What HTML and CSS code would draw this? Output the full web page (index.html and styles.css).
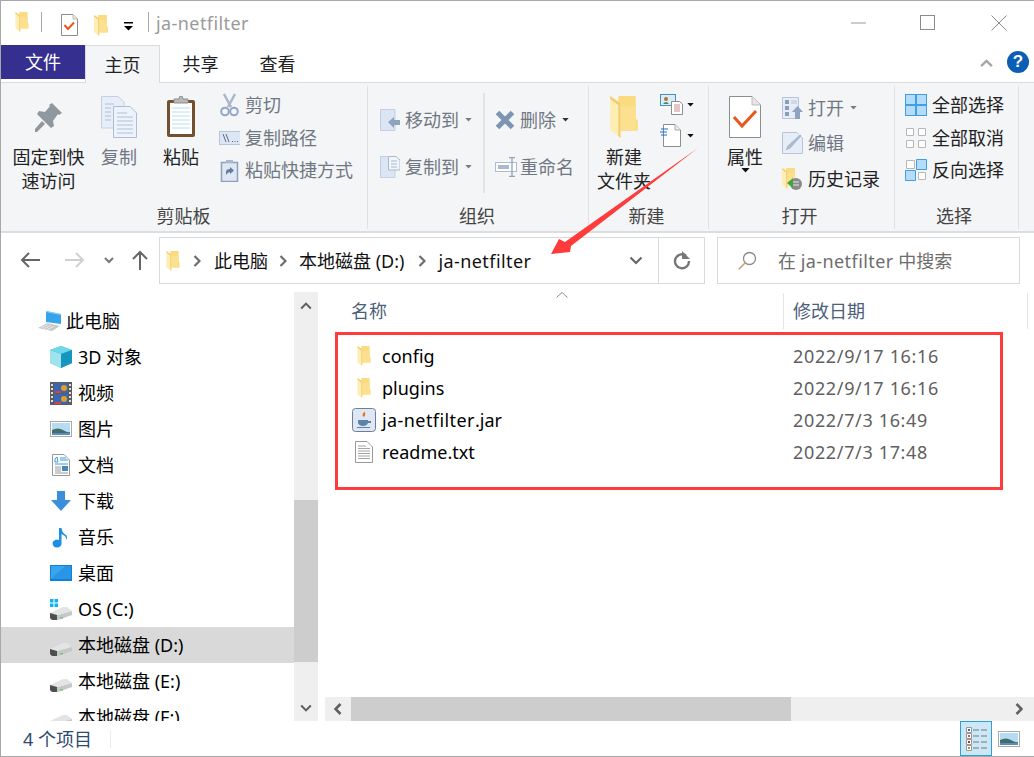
FILE: index.html
```html
<!DOCTYPE html>
<html lang="zh-CN">
<head>
<meta charset="utf-8">
<title>ja-netfilter</title>
<link rel="stylesheet" href="styles.css">
</head>
<body>
<svg class="defs" aria-hidden="true">
  <symbol id="folder" viewBox="0 0 27 41">
    <path d="M8 0H25V23H27V34H9L8 30Z" fill="#fbdb80"/>
    <path d="M9 10H25V34H9Z" fill="#fbe08f"/>
    <path d="M0 0L10 7V41L1 34H0Z" fill="#fdeeb4"/>
    <path d="M0 0L10 7V41L8 39V9L0 3Z" fill="#f3cd6c"/>
  </symbol>
  <symbol id="drive" viewBox="0 0 22 13">
    <path d="M0 6L13 0H17L22 4L8 8H4Z" fill="#e3e4e5"/>
    <path d="M0 6L4 8H8L22 4V8L8 13H2L0 11Z" fill="#c6c7c8"/>
    <path d="M0 6L7 8V13H2L0 11Z" fill="#4f4f4f"/>
    <path d="M10 10h3v1.500h-3z" fill="#7fc27a"/>
  </symbol>
  <symbol id="chev" viewBox="0 0 14 10">
    <path d="M1 8L7 2L13 8" fill="none" stroke="currentColor" stroke-width="2.6"/>
  </symbol>
  <symbol id="caret" viewBox="0 0 8 5">
    <path d="M0 0H8L4 4.5Z" fill="currentColor"/>
  </symbol>
  <symbol id="crumb" viewBox="0 0 8 12">
    <path d="M1.5 1L6.5 6L1.5 11" fill="none" stroke="#6d6d6d" stroke-width="2.2"/>
  </symbol>
  <symbol id="landscape" viewBox="0 0 22 16">
    <rect x=".5" y=".5" width="21" height="15" fill="#fff" stroke="#a9a9a9"/>
    <rect x="2" y="2" width="18" height="12" fill="#b6dcf5"/>
    <path d="M2 9Q8 6 13 9T20 11V14H2Z" fill="#3f6f65"/>
    <path d="M2 12H20V14H2Z" fill="#5a8cc0"/>
  </symbol>
</svg>

<div class="window">
  <header class="titlebar">
    <svg class="qa qa-folder1" width="14" height="20"><use href="#folder"/></svg>
    <span class="qa-sep qa-sep1"></span>
    <svg class="qa qa-check" width="17" height="22" viewBox="0 0 17 22">
      <path d="M.5.5H12L16.5 5V21.5H.5Z" fill="#fff" stroke="#8d8d8d"/>
      <path d="M12 .5V5H16.5" fill="#e8e8e8" stroke="#bbb"/>
      <path d="M3.5 11L7 15L13 8.5" fill="none" stroke="#e8561e" stroke-width="2"/>
    </svg>
    <svg class="qa qa-folder2" width="14" height="21"><use href="#folder"/></svg>
    <svg class="qa qa-drop" width="9" height="9" viewBox="0 0 9 9">
      <path d="M0 0H9V1.5H0Z" fill="#000"/><path d="M0 4H9L4.5 8.5Z" fill="#000"/>
    </svg>
    <span class="qa-sep qa-sep2"></span>
    <span class="title-text wide">ja-netfilter</span>
    <div class="winctl">
      <svg class="ctl-min" width="15" height="2" viewBox="0 0 15 2"><path d="M0 1H15" stroke="#9a9a9a"/></svg>
      <svg class="ctl-max" width="15" height="15" viewBox="0 0 15 15"><rect x=".5" y=".5" width="14" height="14" fill="none" stroke="#8c8c8c"/></svg>
      <svg class="ctl-close" width="16" height="16" viewBox="0 0 16 16"><path d="M.5.5L15.5 15.5M15.5.5L.5 15.5" stroke="#8c8c8c" fill="none"/></svg>
    </div>
  </header>

  <nav class="tabs">
    <span class="tab tab-file">文件</span>
    <span class="tab tab-home">主页</span>
    <span class="tab tab-plain tab-share">共享</span>
    <span class="tab tab-plain tab-view">查看</span>
    <svg class="ribbon-up" width="17" height="9"><use href="#chev"/></svg>
    <span class="help">?</span>
  </nav>

  <section class="ribbon">
    <div class="group g-clip">
      <div class="group-body">
        <div class="big w79">
          <svg class="big-icon" width="32" height="42" viewBox="0 0 32 42">
            <path d="M19 6L29 16L26 18L25 17L20 24L21 29L18 31L4.000 17L6 14L12 15L17 9L16 8Z" transform="translate(0 1)" fill="#8f989f"/>
            <path d="M9 25L2 33V36H4L12 28Z" fill="#8f989f"/>
          </svg>
          <span class="big-label">固定到快<br>速访问</span>
        </div>
        <div class="big w62 off">
          <svg class="big-icon" width="36" height="42" viewBox="0 0 36 42">
            <path d="M.5.5H17L23 6V32H.5Z" fill="#e8eef8" stroke="#c5d0e2"/>
            <path d="M12.500 10.500H29L35.500 17V41.500H12.500Z" fill="#eef3fb" stroke="#adbdd6"/>
            <path d="M4 8h9M4 12h6M4 16h6M4 20h6M4 24h6M16 17h10M16 21h16M16 25h16M16 29h16M16 33h16M16 37h16" stroke="#aebfd8"/>
          </svg>
          <span class="big-label">复制</span>
        </div>
        <div class="big w62">
          <svg class="big-icon" width="30" height="42" viewBox="0 0 30 42">
            <rect x="1" y="4" width="28" height="37" rx="2" fill="#75502f"/>
            <rect x="4" y="7" width="22" height="31" fill="#fff"/>
            <path d="M6 12h18M6 16h18M6 20h18M6 24h18M6 28h18M6 32h18" stroke="#bcdcf2"/>
            <path d="M8 3h5l1-3h2l1 3h5v4H8Z" fill="#b8b8b8" stroke="#8f8f8f"/>
          </svg>
          <span class="big-label">粘贴</span>
        </div>
        <div class="col rows32 ml7 off">
          <div class="row">
            <svg class="ic21" width="21" height="24" viewBox="0 0 21 24">
              <path d="M5 1L12 14M16 1L9 14" stroke="#a8b7cd" stroke-width="2.500" fill="none"/>
              <circle cx="6" cy="18.500" r="3.800" fill="none" stroke="#90a7c7" stroke-width="2"/>
              <circle cx="15" cy="18.500" r="3.800" fill="none" stroke="#90a7c7" stroke-width="2"/>
            </svg>
            <span>剪切</span>
          </div>
          <div class="row">
            <svg class="ic21" width="21" height="14" viewBox="0 0 21 14">
              <rect x=".5" y=".5" width="21" height="13" fill="#dde6f2" stroke="#b5c5da"/>
              <path d="M4 3L7 11M7 3L10 11" stroke="#5d6f88"/>
              <path d="M13 10.500h1M15.500 10.500h1M18 10.500h1" stroke="#5d6f88"/>
            </svg>
            <span>复制路径</span>
          </div>
          <div class="row">
            <svg class="ic21" width="21" height="23" viewBox="0 0 21 23">
              <path d="M2.500 3.500H18.500V22.500H2.500Z" fill="#dfe7f2" stroke="#8da1bc" stroke-width="1.500"/>
              <path d="M7 1H14V4H7Z" fill="#a9b8cc"/>
              <path d="M7 16V13Q7 10 11 10V8L15 11.500L11 15V13Q9 13 7 16Z" fill="#607d9f"/>
            </svg>
            <span>粘贴快捷方式</span>
          </div>
        </div>
      </div>
      <div class="group-label">剪贴板</div>
    </div>

    <div class="group g-org">
      <div class="group-body">
        <div class="col rows47 org-a off">
          <div class="row">
            <svg class="ic20" width="20" height="22" viewBox="0 0 20 22">
              <path d="M.5.500H15V21.500H.5Z" fill="#dbe5f3" stroke="#c3d0e3"/>
              <path d="M8 13L14 8V11H20V16H14V19Z" fill="#8fa3bf"/>
            </svg>
            <span>移动到</span><svg class="drop" width="7" height="4"><use href="#caret"/></svg>
          </div>
          <div class="row">
            <svg class="ic20" width="20" height="22" viewBox="0 0 20 22">
              <path d="M.5.500H15V21.500H.5Z" fill="#dbe5f3" stroke="#c3d0e3"/>
              <path d="M8.500.500H16L20 4V14H8.500Z" fill="#f2f5fa" stroke="#a9b9d0"/>
              <path d="M11 5h6M11 8h6M11 11h6" stroke="#a9b9d0"/>
            </svg>
            <span>复制到</span><svg class="drop" width="7" height="4"><use href="#caret"/></svg>
          </div>
        </div>
        <span class="vsep"></span>
        <div class="col rows47 org-b">
          <div class="row off">
            <svg class="ic20" width="20" height="20" viewBox="0 0 20 20">
              <path d="M2.500 2.500L17.500 17.500M17.500 2.500L2.500 17.500" stroke="#7e94b3" stroke-width="5"/>
            </svg>
            <span>删除</span><svg class="drop drop-dark" width="7" height="4"><use href="#caret"/></svg>
          </div>
          <div class="row off">
            <svg class="ic22" width="22" height="20" viewBox="0 0 22 20">
              <rect x=".5" y="5.500" width="21" height="9" fill="#fff" stroke="#aebcd0"/>
              <rect x="3" y="8" width="11" height="4" fill="#a9b9d0"/>
              <path d="M14 .5H20M17 .5V19.500M14 19.500H20" stroke="#8fa3bf" stroke-width="1.300" fill="none"/>
            </svg>
            <span class="tight">重命名</span>
          </div>
        </div>
      </div>
      <div class="group-label">组织</div>
    </div>

    <div class="group g-new">
      <div class="group-body">
        <div class="big w70">
          <svg class="big-icon" width="28" height="42"><use href="#folder"/></svg>
          <span class="big-label">新建<br>文件夹</span>
        </div>
        <div class="col rows31 ml1">
          <div class="row">
            <svg width="24" height="21" viewBox="0 0 24 21">
              <rect x=".5" y=".5" width="15" height="11" fill="#d9ecf8" stroke="#4a8fc2"/>
              <circle cx="6" cy="5" r="2" fill="#b3703a"/><path d="M3 10Q6 6 9 10Z" fill="#3f8f5a"/>
              <path d="M11.500 7.500H19.500L22.500 10V20.500H11.500Z" fill="#fff" stroke="#8d8d8d"/>
              <path d="M14 11h6M14 13h6M14 15h6M14 17h6" stroke="#d08a8a"/>
            </svg>
            <svg class="drop drop-black" width="7" height="4"><use href="#caret"/></svg>
          </div>
          <div class="row">
            <svg width="21" height="23" viewBox="0 0 21 23">
              <path d="M3.500.5H15L20.500 6V22.500H3.500Z" fill="#fff" stroke="#8d8d8d"/>
              <path d="M15 .5V6H20.500" fill="#ececec" stroke="#aaa"/>
              <path d="M1 5h7M0 8h7M1 11h6" stroke="#1672c4" stroke-width="1.200"/>
            </svg>
            <svg class="drop drop-black drop-wide" width="7" height="4"><use href="#caret"/></svg>
          </div>
        </div>
      </div>
      <div class="group-label">新建</div>
    </div>

    <div class="group g-open">
      <div class="group-body">
        <div class="big w72">
          <svg class="big-icon" width="32" height="42" viewBox="0 0 32 42">
            <path d="M.5.5H23L31.500 9V41.500H.5Z" fill="#fff" stroke="#8d8d8d"/>
            <path d="M23 .5V9H31.500" fill="#e6e6e6" stroke="#bdbdbd"/>
            <path d="M5 21L13 30L27 15" fill="none" stroke="#e8561e" stroke-width="3"/>
          </svg>
          <span class="big-label">属性</span>
          <svg class="prop-caret" width="9" height="5"><use href="#caret"/></svg>
        </div>
        <div class="col rows36 ml1">
          <div class="row off">
            <svg class="ic21" width="21" height="22" viewBox="0 0 21 22">
              <rect x=".5" y=".5" width="16" height="21" fill="#e7edf6" stroke="#b6c5da"/>
              <path d="M3 3h4v4H3zM3 9h4v4H3zM3 15h4v4H3z" fill="#8a9fbd"/>
              <path d="M9 4h6M9 6h6" stroke="#b6c5da"/>
              <path d="M15.500 9L21 15H18V22H13V15H10Z" fill="#8fa3bf"/>
            </svg>
            <span>打开</span><svg class="drop" width="7" height="4"><use href="#caret"/></svg>
          </div>
          <div class="row off">
            <svg class="ic21" width="21" height="22" viewBox="0 0 21 22">
              <path d="M.5.500H15L20.500 6V21.500H.5Z" fill="#e7edf6" stroke="#b6c5da"/>
              <path d="M3 19L5 14L18 2L20 4L8 17Z" fill="#a9b9d0" stroke="#fff" stroke-width=".5"/>
            </svg>
            <span>编辑</span>
          </div>
          <div class="row">
            <svg class="ic21" width="21" height="22" viewBox="0 0 21 22">
              <use href="#folder" width="14" height="21"/>
              <circle cx="14" cy="16" r="6" fill="#8b8b8b"/>
              <path d="M11 14h6M11 17h6" stroke="#e5e5e5"/>
              <path d="M5 15L11 10V20Z" fill="#3ea63a"/>
            </svg>
            <span class="on">历史记录</span>
          </div>
        </div>
      </div>
      <div class="group-label">打开</div>
    </div>

    <div class="group g-sel">
      <div class="group-body">
        <div class="col rows32">
          <div class="row">
            <svg class="ic22" width="22" height="22" viewBox="0 0 22 22">
              <rect x=".5" y=".5" width="21" height="21" fill="#b5dcfa" stroke="#3f9ee6"/>
              <path d="M11 0V22M0 11H22" stroke="#3f9ee6" stroke-width="2"/>
            </svg>
            <span class="on">全部选择</span>
          </div>
          <div class="row">
            <svg class="ic22" width="22" height="22" viewBox="0 0 22 22">
              <path d="M1.500 1.500h7v7h-7zM13.500 1.500h7v7h-7zM1.500 13.500h7v7h-7zM13.500 13.500h7v7h-7z" fill="#fff" stroke="#b7b7b7"/>
            </svg>
            <span class="on">全部取消</span>
          </div>
          <div class="row">
            <svg class="ic22" width="22" height="22" viewBox="0 0 22 22">
              <path d="M1.500 1.500h8v8h-8zM13.500 13.500h7v7h-7z" fill="#fff" stroke="#b7b7b7"/>
              <path d="M11.500 .5h10v10h-10zM.5 11.500h10v10h-10z" fill="#b5dcfa" stroke="#3f9ee6"/>
            </svg>
            <span class="on">反向选择</span>
          </div>
        </div>
      </div>
      <div class="group-label">选择</div>
    </div>
  </section>

  <div class="addr">
    <div class="navs">
      <svg class="nav-back" width="20" height="16" viewBox="0 0 20 16"><path d="M9 1L2 8L9 15M2 8H20" fill="none" stroke="#666" stroke-width="2"/></svg>
      <svg class="nav-fwd" width="20" height="16" viewBox="0 0 20 16"><path d="M11 1L18 8L11 15M18 8H0" fill="none" stroke="#d0d0d0" stroke-width="2"/></svg>
      <svg class="nav-down" width="12" height="8" viewBox="0 0 12 8"><path d="M2 2L6 6L10 2" fill="none" stroke="#777" stroke-width="2"/></svg>
      <svg class="nav-up" width="16" height="20" viewBox="0 0 16 20"><path d="M1 9L8 2L15 9M8 2V20" fill="none" stroke="#666" stroke-width="2"/></svg>
    </div>
    <div class="pathbox">
      <svg class="path-folder" width="14" height="20"><use href="#folder"/></svg>
      <svg class="crumb c1" width="8" height="12"><use href="#crumb"/></svg>
      <span>此电脑</span>
      <svg class="crumb" width="8" height="12"><use href="#crumb"/></svg>
      <span>本地磁盘 (D:)</span>
      <svg class="crumb c3" width="8" height="12"><use href="#crumb"/></svg>
      <span class="wide">ja-netfilter</span>
      <svg class="path-chev" width="14" height="9" viewBox="0 0 14 9"><path d="M1.500 1.500L7 7L12.500 1.500" fill="none" stroke="#666" stroke-width="2.200"/></svg>
      <div class="refresh">
        <svg width="18" height="19" viewBox="0 0 18 19">
          <path d="M13 4.500A7 7 0 1 0 16 10" fill="none" stroke="#777" stroke-width="2.400"/>
          <path d="M9 0L9 8H17Z" fill="#777"/>
        </svg>
      </div>
    </div>
    <div class="searchbox">
      <svg width="19" height="19" viewBox="0 0 19 19"><circle cx="11.500" cy="7.500" r="6" fill="none" stroke="#8a8a8a" stroke-width="1.300"/><path d="M7 12L.8 18.200" stroke="#c99a6b" stroke-width="1.500"/></svg>
      <span>在 <span class="wide">ja-netfilter</span> 中搜索</span>
    </div>
  </div>

  <main class="main">
    <aside class="sidebar">
      <ul class="tree">
        <li class="node node-pc">
          <svg width="24" height="20" viewBox="0 0 24 20">
            <path d="M8 0L23 3V13L8 11Z" fill="#35a4ea"/><path d="M8 0L23 3V4L8 1Z" fill="#8fd2f7"/>
            <path d="M0 17L9 12L22 15L14 20Z" fill="#c6c9cc"/><path d="M3 16.500l7-3M6 17.500l7-3M9 18.500l7-3" stroke="#e8e8e8"/>
          </svg>
          <span>此电脑</span>
        </li>
        <li class="node">
          <svg width="22" height="22" viewBox="0 0 22 22">
            <path d="M11 0L22 4V17L11 22L0 17V4Z" fill="#27b4d8"/><path d="M0 4L11 8V22L0 17Z" fill="#9fe3ee"/><path d="M11 0L22 4L11 8L0 4Z" fill="#6fd7e8"/><path d="M11 8L22 4V17L11 22Z" fill="#1596bf"/>
          </svg>
          <span>3D 对象</span>
        </li>
        <li class="node">
          <svg width="22" height="23" viewBox="0 0 22 23">
            <rect width="22" height="23" fill="#5c5c5c"/>
            <rect x="4" y="1" width="14" height="10" fill="#3a64b4"/><rect x="4" y="12" width="14" height="10" fill="#3a64b4"/>
            <circle cx="14" cy="6" r="3" fill="#e0a020"/><circle cx="14" cy="17" r="3" fill="#e0a020"/><path d="M5 9h6v2H5zM5 20h6v2H5z" fill="#d8433a"/>
            <path d="M1 2h2v2H1zM1 6h2v2H1zM1 10h2v2H1zM1 14h2v2H1zM1 18h2v2H1zM19 2h2v2h-2zM19 6h2v2h-2zM19 10h2v2h-2zM19 14h2v2h-2zM19 18h2v2h-2z" fill="#ddd"/>
          </svg>
          <span>视频</span>
        </li>
        <li class="node">
          <svg width="22" height="16"><use href="#landscape"/></svg>
          <span>图片</span>
        </li>
        <li class="node">
          <svg width="22" height="22" viewBox="0 0 18 22">
            <path d="M.5.5H12L17.500 6V21.500H.5Z" fill="#fff" stroke="#999"/>
            <path d="M3 5L5 3L6 8H3zM8 4h6M8 6h8M3 10h13" stroke="#3a9ae0" fill="none"/>
            <path d="M3 13h6M3 15h6M3 17h6M3 19h13" stroke="#999"/><rect x="10" y="12" width="6" height="5" fill="#4a86b8"/>
          </svg>
          <span>文档</span>
        </li>
        <li class="node">
          <svg width="22" height="20" viewBox="0 0 20 20"><path d="M6 0H14V9H20L10 20L0 9H6Z" fill="#3a8fdc"/></svg>
          <span>下载</span>
        </li>
        <li class="node">
          <svg width="22" height="21" viewBox="0 0 22 21"><path d="M9 1H11.500Q12 6 16 8Q18 10 16 13Q17 9 11.500 7V16A4.500 4 0 1 1 9 13Z" fill="#1a8fe3"/></svg>
          <span>音乐</span>
        </li>
        <li class="node">
          <svg width="22" height="16" viewBox="0 0 22 16"><rect width="22" height="16" fill="#0f80d8"/><path d="M1 1H21V14H1Z" fill="#37a6ee"/><path d="M1 14L15 1H21V14Z" fill="#2a95e4"/></svg>
          <span>桌面</span>
        </li>
        <li class="node">
          <svg width="22" height="21" viewBox="0 0 22 21">
            <path d="M0 0H3.500V3.500H0ZM4.500 0H8V3.500H4.500ZM0 4.500H3.500V8H0ZM4.500 4.500H8V8H4.500Z" fill="#12b4f0"/>
            <use href="#drive" y="8" width="22" height="13"/>
          </svg>
          <span>OS (C:)</span>
        </li>
        <li class="node selected">
          <svg class="drive-ic" width="22" height="13"><use href="#drive"/></svg>
          <span>本地磁盘 (D:)</span>
        </li>
        <li class="node">
          <svg class="drive-ic" width="22" height="13"><use href="#drive"/></svg>
          <span>本地磁盘 (E:)</span>
        </li>
        <li class="node">
          <svg class="drive-ic" width="22" height="13"><use href="#drive"/></svg>
          <span>本地磁盘 (F:)</span>
        </li>
      </ul>
      <div class="vscroll">
        <svg class="vs-up" width="12" height="8"><use href="#chev"/></svg>
        <div class="vs-top"></div>
        <div class="vs-thumb"></div>
        <div class="vs-bottom"></div>
        <svg class="vs-down" width="12" height="8"><use href="#chev"/></svg>
      </div>
    </aside>
    <section class="content">
      <div class="list-head">
        <span class="th-name">名称</span>
        <svg class="sort" width="12" height="6" viewBox="0 0 12 6"><path d="M.5 5.500L6 .5L11.500 5.500" fill="none" stroke="#8a8a8a"/></svg>
        <span class="th-date">修改日期</span>
      </div>
      <div class="files">
        <div class="file">
          <span class="f-ico"><svg width="14" height="20"><use href="#folder"/></svg></span>
          <span class="f-name">config</span><span class="f-date">2022/9/17 16:16</span>
        </div>
        <div class="file">
          <span class="f-ico"><svg width="14" height="20"><use href="#folder"/></svg></span>
          <span class="f-name">plugins</span><span class="f-date">2022/9/17 16:16</span>
        </div>
        <div class="file">
          <span class="f-ico">
            <svg width="24" height="24" viewBox="0 0 24 24">
              <rect x=".5" y=".5" width="23" height="23" rx="3" fill="#dfe8f2" stroke="#6c8199"/>
              <path d="M12 4Q9 8 12 9Q14 7 13 4Z" fill="#e4761b"/>
              <path d="M6 12H16V15Q15 18 11 18Q7 18 6 15ZM16 13H19V15H16Z" fill="#5b84a8"/>
              <path d="M5 19.500H18" stroke="#5b84a8"/>
            </svg>
          </span>
          <span class="f-name"><span class="wide">ja-netfilter</span>.jar</span><span class="f-date">2022/7/3 16:49</span>
        </div>
        <div class="file">
          <span class="f-ico">
            <svg width="18" height="22" viewBox="0 0 18 22">
              <path d="M.5.5H12L17.500 6V21.500H.5Z" fill="#fff" stroke="#9a9a9a"/>
              <path d="M3 5h8M3 7.500h12M3 10h12M3 12.500h12M3 15h12M3 17.500h12" stroke="#a5a5a5"/>
            </svg>
          </span>
          <span class="f-name">readme.txt</span><span class="f-date">2022/7/3 17:48</span>
        </div>
      </div>
      <div class="hscroll">
        <svg class="hs-left" width="8" height="12" viewBox="0 0 8 12"><path d="M6.500 1L1.500 6L6.500 11" fill="none" stroke="#606060" stroke-width="2.600"/></svg>
        <div class="hs-thumb"></div>
        <svg class="hs-right" width="8" height="12" viewBox="0 0 8 12"><path d="M1.500 1L6.500 6L1.500 11" fill="none" stroke="#606060" stroke-width="2.600"/></svg>
      </div>
    </section>
  </main>

  <footer class="status">
    <span class="count">4 个项目</span>
    <span class="status-sep"></span>
    <div class="views">
      <span class="view active">
        <svg width="21" height="24" viewBox="0 0 21 24">
          <path d="M.5.500h5v5h-5zM.5 6.500h5v5h-5zM.5 12.500h5v5h-5zM.5 18.500h5v5h-5z" fill="#fff" stroke="#999"/>
          <path d="M2 2h2v2H2z" fill="#2a73b8"/><path d="M2 8h2v2H2z" fill="#c5682c"/><path d="M2 14h2v2H2z" fill="#c62828"/><path d="M2 20h2v2H2z" fill="#86a83a"/>
          <path d="M7 3h6M15 3h6M7 9h6M15 9h6M7 15h6M15 15h6M7 21h6M15 21h6" stroke="#777"/>
        </svg>
      </span>
      <span class="view">
        <svg width="22" height="16"><use href="#landscape"/></svg>
      </span>
    </div>
  </footer>

  <svg class="arrow" width="160" height="120" viewBox="0 0 160 120">
    <path d="M148 0L21 98L20 104L1 106L9 91L15 94Z" fill="#ff3b3b"/>
  </svg>
  <div class="redbox"></div>
</div>
</body>
</html>
```

FILE: styles.css
```css
* { box-sizing: border-box; }
html, body { margin: 0; padding: 0; height: 100%; overflow: hidden; background: #fff; }
body { font-family: "Noto Sans", "Noto Sans CJK SC", sans-serif; font-size: 18px; color: #000; }
svg { display: block; flex: none; }
.defs { position: absolute; width: 0; height: 0; }
ul { list-style: none; margin: 0; padding: 0; }
.wide { letter-spacing: .42px; }

.window {
  position: relative;
  width: 1034px;
  height: 757px;
  display: flex;
  flex-direction: column;
  border-left: 1px solid #a8a8a8;
  border-top: 1px solid #a8a8a8;
  border-bottom: 1px solid #a8a8a8;
  overflow: hidden;
}

/* title bar */
.titlebar { height: 44px; display: flex; align-items: center; flex: none; }
.qa-folder1 { margin-left: 14px; margin-top: -3px; }
.qa-sep { width: 1px; height: 20px; background: #a8a8a8; margin-top: -3px; flex: none; }
.qa-sep1 { margin-left: 12px; }
.qa-check { margin-left: 19px; margin-top: 3px; }
.qa-folder2 { margin-left: 16px; margin-top: 4px; }
.qa-drop { margin-left: 16px; margin-top: 6px; }
.qa-sep2 { margin-left: 15px; }
.title-text { margin-left: 7px; margin-top: -1px; color: #9a9a9a; line-height: 24px; }
.winctl { margin-left: auto; display: flex; align-items: center; margin-top: -1px; }
.ctl-max { margin-left: 54px; }
.ctl-close { margin-left: 56px; margin-right: 27px; }

/* tabs */
.tabs {
  height: 38px;
  flex: none;
  display: flex;
  align-items: flex-start;
  border-bottom: 1px solid #dadbdc;
}
.tab { display: flex; align-items: center; justify-content: center; line-height: 24px; color: #222; }
.tab-file { width: 84px; height: 34px; background: #35308f; color: #fff; }
.tab-home {
  width: 75px;
  height: 38px;
  background: #f4f5f7;
  border: 1px solid #d9dadb;
  border-bottom: 0;
}
.tab-plain { width: 77px; height: 37px; }
.tab-share { margin-left: 2px; }
.ribbon-up { margin-left: auto; margin-top: 14px; color: #a6a6a6; }
.help {
  width: 22px;
  height: 22px;
  margin: 6px 5px 0 12px;
  border-radius: 50%;
  background: #0a5fb4;
  color: #fff;
  font: bold 17px/22px "Liberation Sans", sans-serif;
  text-align: center;
}

/* ribbon */
.ribbon {
  height: 150px;
  flex: none;
  display: flex;
  background: #f4f5f7;
  border-bottom: 2px solid #dcdddf;
  padding-top: 3px;
}
.group {
  height: 143px;
  display: flex;
  flex-direction: column;
  border-right: 1px solid #dfe1e4;
  color: #222;
}
.g-clip { width: 367px; padding-left: 8px; }
.g-org { width: 221px; }
.g-new { width: 120px; }
.g-open { width: 186px; }
.g-sel { width: 124px; padding-left: 10px; }
.group-body { flex: 1; display: flex; align-items: flex-start; min-height: 0; }
.group-label { height: 24px; margin-bottom: 1px; line-height: 24px; text-align: center; color: #444; }
.g-clip .group-label { padding-right: 9px; }
.g-org .group-label { padding-right: 2px; }
.g-new .group-label { padding-right: 4px; }
.g-open .group-label { padding-right: 4px; }
.g-sel .group-label { padding-right: 15px; }

.big { display: flex; flex-direction: column; align-items: center; padding-top: 10px; }
.big-icon { height: 42px; }
.big-label { margin-top: 7px; line-height: 24px; text-align: center; }
.w79 { width: 79px; }
.w62 { width: 62px; }
.w70 { width: 70px; }
.w72 { width: 72px; }
.off { color: #6f7882; }
.on { color: #222; }
.prop-caret { color: #111; margin-top: -1px; }

.col { display: flex; flex-direction: column; }
.row { display: flex; align-items: center; white-space: nowrap; line-height: 24px; }
.row > span { margin-left: 5px; }
.row > span.tight { margin-left: 3px; }
.rows32 { padding-top: 3px; }
.rows32 .row { height: 32.5px; }
.rows47 { padding-top: 10px; }
.rows47 .row { height: 47px; }
.rows31 { padding-top: 3px; }
.rows31 .row { height: 31px; }
.rows36 { padding-top: 4px; }
.rows36 .row { height: 35.5px; }
.ml7 { margin-left: 7px; }
.ml1 { margin-left: 1px; }

.org-a { margin-left: 12px; width: 103px; }
.org-b { margin-left: 10px; }
.vsep { width: 2px; height: 100px; margin-top: 7px; background: #e0e2e5; flex: none; }
.drop { margin-left: 6px; color: #7b7b7b; }
.drop-dark { margin-left: 6px; color: #333; }
.drop-black { margin-left: 3px; color: #111; }
.drop-wide { margin-left: 6px; }

/* address bar */
.addr { height: 59px; flex: none; display: flex; align-items: flex-start; padding-top: 4px; }
.navs { width: 158px; flex: none; height: 46px; display: flex; align-items: center; padding-left: 19px; }
.nav-fwd { margin-left: 25px; }
.nav-down { margin-left: 18px; }
.nav-up { margin-left: 17px; }
.pathbox {
  width: 546px;
  height: 47px;
  flex: none;
  border: 1px solid #d9d9d9;
  display: flex;
  align-items: center;
  white-space: nowrap;
  color: #111;
  line-height: 24px;
}
.path-folder { margin-left: 6px; }
.crumb { margin: 0 12px 0 11px; }
.crumb.c1 { margin-left: 13px; margin-right: 13px; }
.crumb.c3 { margin-left: 14px; }
.path-chev { margin-left: auto; margin-right: 15px; }
.refresh {
  width: 46px;
  height: 45px;
  border-left: 1px solid #d9d9d9;
  display: flex;
  align-items: center;
  justify-content: center;
}
.searchbox {
  width: 303px;
  height: 47px;
  margin-left: 12px;
  flex: none;
  border: 1px solid #d9d9d9;
  display: flex;
  align-items: center;
  padding-left: 20px;
  color: #6d6d6d;
  white-space: nowrap;
  line-height: 24px;
}
.searchbox > span { margin-left: 21px; }

/* main */
.main { height: 429px; flex: none; display: flex; }
.sidebar { width: 317px; flex: none; display: flex; }
.tree { width: 293px; height: 429px; padding-top: 11px; overflow: hidden; flex: none; }
.node { height: 36px; display: flex; align-items: center; padding-left: 49px; line-height: 24px; white-space: nowrap; }
.node svg { width: 22px; }
.node span { margin-left: 6px; }
.node svg.drive-ic { margin-top: 9px; }
.node-pc { padding-left: 37px; }
.node-pc svg { width: 24px; }
.node-pc span { margin-left: 4px; }
.selected { background: #d9d9d9; }
.vscroll { width: 24px; height: 429px; background: #efefef; display: flex; flex-direction: column; align-items: center; color: #606060; }
.vs-up { margin-top: 10px; flex: none; }
.vs-top { height: 190px; flex: none; }
.vs-thumb { width: 24px; height: 162px; background: #cdcdcd; flex: none; }
.vs-bottom { flex: 1; }
.vs-down { margin-bottom: 9px; transform: rotate(180deg); }

.content { flex: 1; min-width: 0; display: flex; flex-direction: column; margin-left: 7px; }
.list-head { height: 38px; flex: none; position: relative; display: flex; align-items: center; line-height: 24px; color: #4c607a; }
.th-name { margin-left: 26px; width: 433px; flex: none; height: 36px; line-height: 36px; border-right: 1px solid #e5e5e5; }
.th-date { margin-left: 9px; height: 36px; line-height: 36px; flex: 1; border-right: 1px solid #e5e5e5; margin-right: 6px; }
.sort { position: absolute; left: 231px; top: 0; }
.files { flex: 1; min-height: 0; padding-top: 10px; }
.file { height: 32px; display: flex; align-items: center; line-height: 24px; white-space: nowrap; }
.f-ico { width: 24px; margin-left: 27px; display: flex; justify-content: center; flex: none; }
.f-name { margin-left: 6px; width: 411px; flex: none; }
.f-date { color: #5f5f5f; letter-spacing: .65px; }
.hscroll { height: 24px; flex: none; background: #efefef; display: flex; align-items: center; }
.hs-left { margin-left: 9px; }
.hs-thumb { width: 440px; height: 24px; margin-left: 9px; background: #cdcdcd; flex: none; }
.hs-right { margin-left: auto; margin-right: 11px; }

/* status */
.status { flex: 1; display: flex; align-items: center; min-height: 0; }
.count { margin-left: 22px; color: #2d4a6e; line-height: 24px; width: 87px; }
.status-sep { width: 1px; height: 18px; background: #ececec; }
.views { margin-left: auto; display: flex; align-items: center; height: 100%; margin-right: 14px; }
.view { width: 32px; height: 100%; display: flex; align-items: center; justify-content: center; }
.view.active { background: #cce8f6; border: 1px solid #2ea0d4; }
.view + .view { margin-left: 6px; width: 22px; }

/* annotations laid over the window */
.arrow { position: absolute; left: 549px; top: 147px; }
.redbox { position: absolute; left: 334px; top: 331px; width: 668px; height: 158px; border: 3px solid #ff3b3b; }
```
